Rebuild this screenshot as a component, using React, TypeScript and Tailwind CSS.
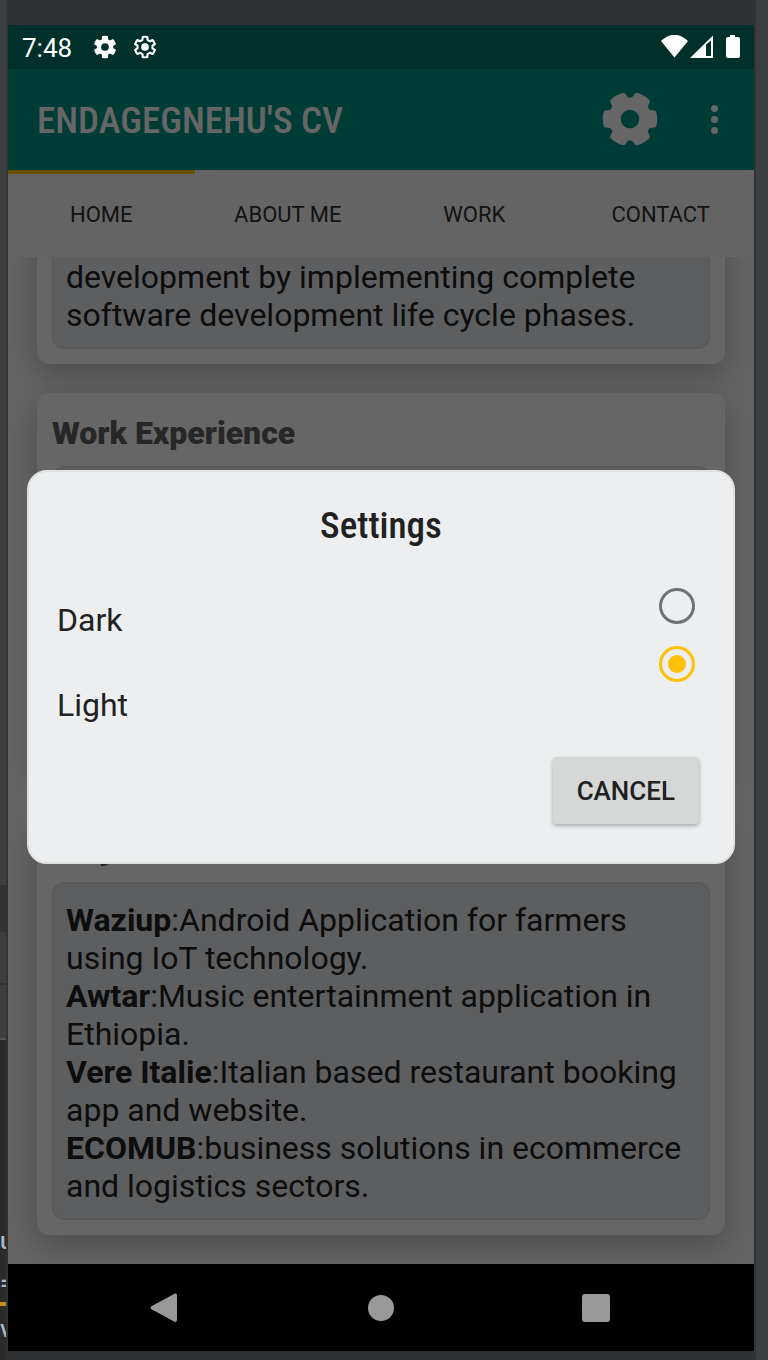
import React, { useState } from "react";

const font = "font-['Roboto','Noto_Sans',sans-serif]";
const condensed = "font-['Roboto_Condensed','Liberation_Sans_Narrow','Roboto',sans-serif]";

function gearPath(teeth: number, outer: number, inner: number, tip: number, root: number, startDeg: number) {
  const step = 360 / teeth;
  const pt = (r: number, deg: number) => {
    const a = (deg * Math.PI) / 180;
    return `${(r * Math.cos(a)).toFixed(2)} ${(r * Math.sin(a)).toFixed(2)}`;
  };
  let d = "";
  for (let i = 0; i < teeth; i++) {
    const c = startDeg + i * step;
    d += `${i === 0 ? "M" : "L"}${pt(inner, c - root)}L${pt(outer, c - tip)}A${outer} ${outer} 0 0 1 ${pt(outer, c + tip)}L${pt(inner, c + root)}`;
    d += `Q${pt(inner - 1, c + step / 2)} ${pt(inner, c + step - root)}`;
  }
  return d + "Z";
}

function ToolbarGear() {
  return (
    <svg viewBox="-28 -28 56 56" className="size-14" aria-hidden="true">
      <path
        fill="currentColor"
        stroke="currentColor"
        strokeWidth="4"
        strokeLinejoin="round"
        d={gearPath(6, 25.2, 20, 15, 21, 0)}
      />
      <circle r="9.3" className="fill-[#009688]" />
    </svg>
  );
}

function StatusGear({ outline }: { outline?: boolean }) {
  return (
    <svg viewBox="-28 -28 56 56" className="size-6" aria-hidden="true">
      <path
        fill={outline ? "none" : "white"}
        stroke="white"
        strokeWidth={outline ? 5 : 3}
        strokeLinejoin="round"
        d={outline ? gearPath(6, 24, 18, 13, 19, -90) : gearPath(6, 25, 18, 13, 19, -90)}
      />
      <circle r={outline ? 9 : 9} fill={outline ? "white" : "#00302b"} />
    </svg>
  );
}

function Card({ title, children }: { title?: string; children: React.ReactNode }) {
  return (
    <section className="rounded-xl bg-white p-[15px] shadow-[0_10px_30px_rgba(0,0,0,0.25)]">
      {title && <h2 className="mb-3 pt-1 text-[32px] leading-[42px] font-black text-[#616161]">{title}</h2>}
      <div className="rounded-xl border-2 border-[#dfe2e5] bg-[#e8ebef] px-3 pt-[17px] pb-[13px] text-[32px] leading-[38px] text-[#212121]">
        {children}
      </div>
    </section>
  );
}

const projects = [
  ["Waziup", "Android Application for farmers using IoT technology."],
  ["Awtar", "Music entertainment application in Ethiopia."],
  ["Vere Italie", "Italian based restaurant booking app and website."],
  ["ECOMUB", "business solutions in ecommerce and logistics sectors."],
];

const tabs = ["HOME", "ABOUT ME", "WORK", "CONTACT"];

export default function App() {
  const [theme, setTheme] = useState("Light");
  return (
    <div className={`flex h-screen overflow-hidden bg-[#2f3032] ${font}`}>
      <aside className="flex w-2 shrink-0 flex-col overflow-hidden border-r-2 border-[#323232] bg-[#2b2b2b] text-[#a9b7c6]">
        <div className="h-[885px] shrink-0 bg-[#3c3f41]" />
        <div className="h-[47px] shrink-0 bg-[#313335]" />
        <div className="h-[53px] shrink-0 border-b-2 border-[#323232] bg-[#3c3f41]" />
        <div className="h-[55px] shrink-0 border-b-2 border-[#555555] bg-[#3c3f41]" />
        <div className="mt-[188px] text-[24px] leading-[26px] font-medium">u</div>
        <div className="mt-[16px] text-[24px] leading-[26px] font-medium">=</div>
        <div className="mt-[6px] h-1 shrink-0 bg-[#be9117]" />
        <div className="mt-[10px] text-[24px] leading-[26px] font-medium">v</div>
      </aside>

      <div className="flex min-w-0 flex-1 flex-col pt-[25px] pb-[9px]">
        <header className="flex h-11 shrink-0 items-center bg-[#00302b] pr-[13px] pl-[14px] text-white">
          <span className="pt-0.5 text-[26px] leading-8">7:48</span>
          <div className="ml-[21px] flex flex-1 gap-4">
            <StatusGear />
            <StatusGear outline />
          </div>
          <svg viewBox="0 0 80 24" className="h-6 w-20" aria-hidden="true" fill="white">
            <path d="M0 6Q13.500 -6.500 27 6L13.500 22.500Z" />
            <path fillRule="evenodd" d="M29 23L52 .5V23ZM45 9.500V21H50V5.500Z" />
            <path d="M69 0H74V2H77Q79 2 79 4V21Q79 23 77 23H67Q65 23 65 21V4Q65 2 67 2H69Z" />
          </svg>
        </header>

        <div className="relative flex min-h-0 flex-1 flex-col bg-[#fafafa]">
          <div className="flex h-[101px] shrink-0 items-center bg-[#009688] pr-7 pl-[29px] text-white">
            <h1 className={`flex-1 pt-0.5 text-[37px] leading-[44px] font-medium ${condensed}`}>ENDAGEGNEHU'S CV</h1>
            <button aria-label="Settings" className="pb-px">
              <ToolbarGear />
            </button>
            <button aria-label="More options" className="ml-11 flex w-6 flex-col items-center gap-1">
              <span className="size-[7px] rounded-full bg-white" />
              <span className="size-[7px] rounded-full bg-white" />
              <span className="size-[7px] rounded-full bg-white" />
            </button>
          </div>
          <nav className="z-0 grid h-[87px] shrink-0 grid-cols-4 bg-[#fafafa]">
            {tabs.map((t, i) => (
              <button
                key={t}
                className={`border-t-4 pb-0.5 text-[22px] leading-7 whitespace-nowrap text-[#303030] ${i === 0 ? "border-[#ffc107]" : "border-transparent"}`}
              >
                {t}
              </button>
            ))}
          </nav>

          <main className="flex min-h-0 flex-1 flex-col justify-end gap-[29px] overflow-hidden px-[29px] pb-[29px]">
            <Card>development by implementing complete software development life cycle phases.</Card>
            <Card title="Work Experience">
              <div className="h-[265px]" />
            </Card>
            <Card title="Projects">
              {projects.map(([name, text]) => (
                <p key={name}>
                  <b>{name}</b>:{text}
                </p>
              ))}
            </Card>
          </main>

          <div className="absolute inset-0 z-10 flex items-center bg-black/60 px-[19px]">
            <div
              role="dialog"
              aria-labelledby="settings-title"
              className="w-full rounded-[20px] border-2 border-[#dfe1e1] bg-[#eceef0] px-7 pt-8 pb-[38px] text-[#212121]"
            >
              <h2 id="settings-title" className={`text-center text-[37px] leading-[44px] font-medium ${condensed}`}>
                Settings
              </h2>
              <div className="mt-[35px] flex justify-between pr-[10px] text-[32px] leading-[38px]">
                <div className="flex flex-col gap-[47px] pt-[18px]">
                  <label htmlFor="dark">Dark</label>
                  <label htmlFor="light">Light</label>
                </div>
                <div className="flex flex-col gap-[22px] pt-[5px]">
                  {["Dark", "Light"].map((t) => (
                    <input
                      key={t}
                      id={t.toLowerCase()}
                      type="radio"
                      name="theme"
                      checked={theme === t}
                      onChange={() => setTheme(t)}
                      className="size-9 appearance-none rounded-full border-[3px] border-[#707172] bg-clip-content p-[6px] checked:border-[#ffc107] checked:bg-[#ffc107]"
                    />
                  ))}
                </div>
              </div>
              <div className="mt-[33px] flex justify-end pr-[6px]">
                <button className="h-[67px] rounded bg-[#d6d8d7] px-6 pt-0.5 text-[26px] leading-8 font-medium shadow-[0_2px_4px_rgba(0,0,0,0.3)]">
                  CANCEL
                </button>
              </div>
            </div>
          </div>
        </div>

        <footer className="grid h-[87px] shrink-0 grid-cols-[1fr_auto_1fr] items-center bg-black text-[#999999]">
          <button aria-label="Back" className="mr-[190px] justify-self-end">
            <svg viewBox="0 0 28 32" className="h-8 w-7" fill="currentColor" aria-hidden="true">
              <path d="M1 14.500L25 1.500Q27 1 27 3V28Q27 30 25 30L1 17Q0 16 1 14.500Z" />
            </svg>
          </button>
          <button aria-label="Home" className="size-[26px] rounded-full bg-[#999999]" />
          <button aria-label="Recent apps" className="ml-[188px] size-7 justify-self-start rounded-[3px] bg-[#999999]" />
        </footer>
      </div>

      <aside className="w-[14px] shrink-0 border-l-2 border-[#323232] bg-[#3c3f41]" />
    </div>
  );
}
